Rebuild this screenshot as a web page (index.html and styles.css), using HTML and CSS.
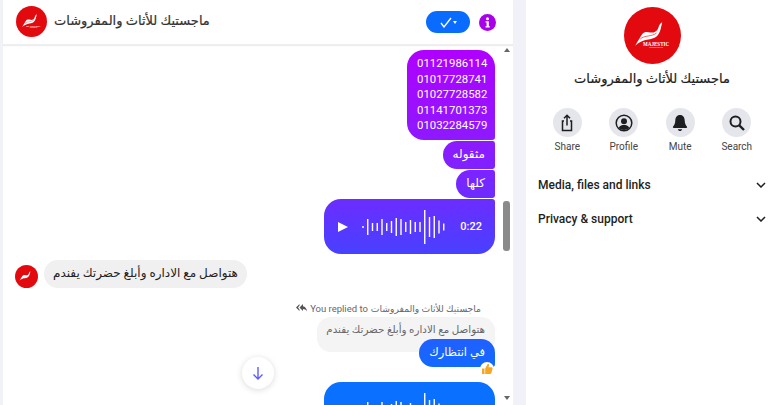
FILE: index.html
```html
<!DOCTYPE html>
<html lang="en">
<head>
    <meta charset="UTF-8">
    <meta name="viewport" content="width=device-width, initial-scale=1.0">
    <title>Messenger chat</title>
    <link rel="stylesheet" href="styles.css">
</head>
<body>
    <div class="layout">
        <section class="chat">
            <header class="chat-header">
                <svg class="avatar-md" viewBox="0 0 56 56">
                    <circle cx="28" cy="28" r="28" fill="#e30a0f"/>
                    <path fill="#fff" d="M37.500 15C35.500 16 34.500 18 33.500 21C32.500 24 29 25.500 26 25C23 24.500 20 24 18 26.500C16 29 14 33 11 38C14 35.500 17 33.500 21 32.500C25 31.500 29.500 31.500 32.500 28.500C35.500 25.500 36.500 20 37.500 15Z"/>
                    <path fill="none" stroke="#e30a0f" stroke-width=".6" d="M16 31.500C20 27.500 27 29.500 32 25.500"/>
                    <text x="31.500" y="38" text-anchor="middle" class="logo-name">MAJESTIC</text>
                    <text x="31.500" y="40.500" text-anchor="middle" class="logo-sub">FURNITURE CO</text>
                </svg>
                <span class="title" dir="rtl" lang="ar">ماجستيك للأثاث والمفروشات</span>
                <button class="status-btn">
                    <svg width="12" height="11" viewBox="0 0 12 11"><path d="M1 6l3 4L11 1" fill="none" stroke="#fff" stroke-width="1.300"/></svg>
                    <span class="caret"></span>
                </button>
                <svg class="info" width="17" height="17" viewBox="0 0 17 17">
                    <circle cx="8.500" cy="8.500" r="8.500" fill="#a800e8"/>
                    <circle cx="8.500" cy="4.700" r="1.500" fill="#fff"/>
                    <path d="M6.500 7.300h3.300v5h1v1.300H6.500v-1.300h1.100V8.600H6.500z" fill="#fff"/>
                </svg>
            </header>

            <div class="chat-body">
                <div class="messages">
                    <div class="bubble out numbers">
                        01121986114<br>01017728741<br>01027728582<br>01141701373<br>01032284579
                    </div>
                    <div class="bubble out short" dir="rtl" lang="ar">مثقوله</div>
                    <div class="bubble out short" dir="rtl" lang="ar">كلها</div>
                    <div class="bubble out audio">
                        <svg width="10" height="10" viewBox="0 0 10 10"><path d="M0 0l10 5-10 5z" fill="#fff"/></svg>
                        <svg class="wave" width="84" height="36" viewBox="0 0 84 36">
                            <path d="M1 17v2M5.750 10v16M10.500 14v8M15.250 14v8M20 10v16M24.750 14v8M29.500 12v12M34.250 9v18M39 10v16M43.750 13v10M48.500 11v14M53.250 13v10M58 13v10M62.750 1v34M67.500 8v20M72.250 7v22M77 11.500v13M81.750 14.500v7"/>
                        </svg>
                        <span class="time">0:22</span>
                    </div>

                    <div class="incoming">
                        <svg class="avatar-sm" viewBox="0 0 56 56">
                            <circle cx="28" cy="28" r="28" fill="#e30a0f"/>
                            <path fill="#fff" d="M37.500 15C35.500 16 34.500 18 33.500 21C32.500 24 29 25.500 26 25C23 24.500 20 24 18 26.500C16 29 14 33 11 38C14 35.500 17 33.500 21 32.500C25 31.500 29.500 31.500 32.500 28.500C35.500 25.500 36.500 20 37.500 15Z"/>
                        </svg>
                        <div class="bubble in" dir="rtl" lang="ar">هتواصل مع الاداره وأبلغ حضرتك يفندم</div>
                    </div>

                    <div class="reply-label">
                        <svg width="11" height="9" viewBox="0 0 11 9"><path d="M3.500 0L0 3.500 3.500 7V5.500L2 3.500l1.500-2zM7 0L3.500 3.500 7 7V5c1.700 0 3 .7 4 2.500C10.800 4.500 9.200 2.500 7 2.200z" fill="#555"/></svg>
                        <span>You replied to</span>
                        <span class="reply-name" dir="rtl" lang="ar">ماجستيك للأثاث والمفروشات</span>
                    </div>
                    <div class="quoted" dir="rtl" lang="ar">هتواصل مع الاداره وأبلغ حضرتك يفندم</div>
                    <div class="bubble out reply" dir="rtl" lang="ar">
                        في انتظارك
                        <span class="reaction">
                            <svg width="12" height="12" viewBox="0 0 12 12"><path d="M1 5.500h2.500V11H1zM4.200 5.500L6.800.8c1-.3 1.500.6 1.200 1.600L7.500 4.300h3c.9 0 1.300.8 1 1.500l-1.200 4.400c-.2.600-.6.800-1.200.8H4.200z" fill="#f5a623"/></svg>
                        </span>
                    </div>
                    <div class="bubble out audio last">
                        <svg width="10" height="10" viewBox="0 0 10 10"><path d="M0 0l10 5-10 5z" fill="#fff"/></svg>
                        <svg class="wave" width="84" height="36" viewBox="0 0 84 36">
                            <path d="M1 17v2M5.750 10v16M10.500 14v8M15.250 14v8M20 10v16M24.750 14v8M29.500 12v12M34.250 9v18M39 10v16M43.750 13v10M48.500 11v14M53.250 13v10M58 13v10M62.750 1v34M67.500 8v20M72.250 7v22M77 11.500v13M81.750 14.500v7"/>
                        </svg>
                    </div>
                </div>
                <div class="scrollbar">
                    <span class="arrow-up"></span>
                    <span class="thumb"></span>
                    <span class="arrow-down"></span>
                </div>
                <button class="to-bottom">
                    <svg width="14" height="14" viewBox="0 0 14 14"><path d="M7 1v12M2.500 8.500L7 13l4.500-4.500" fill="none" stroke="#5b5cff" stroke-width="1.400"/></svg>
                </button>
            </div>
        </section>

        <aside class="details">
            <svg class="avatar-lg" viewBox="0 0 56 56">
                <circle cx="28" cy="28" r="28" fill="#e30a0f"/>
                <path fill="#fff" d="M37.500 15C35.500 16 34.500 18 33.500 21C32.500 24 29 25.500 26 25C23 24.500 20 24 18 26.500C16 29 14 33 11 38C14 35.500 17 33.500 21 32.500C25 31.500 29.500 31.500 32.500 28.500C35.500 25.500 36.500 20 37.500 15Z"/>
                <path fill="none" stroke="#e30a0f" stroke-width=".6" d="M16 31.500C20 27.500 27 29.500 32 25.500"/>
                <text x="31.500" y="38" text-anchor="middle" class="logo-name">MAJESTIC</text>
                <text x="31.500" y="40.500" text-anchor="middle" class="logo-sub">FURNITURE CO</text>
            </svg>
            <div class="details-name" dir="rtl" lang="ar">ماجستيك للأثاث والمفروشات</div>
            <div class="actions">
                <div class="action">
                    <span class="action-icon">
                        <svg width="16" height="18" viewBox="0 0 16 18"><path d="M5 7H3.500v9.500h9V7H11M8 11.500V1.500M5 4.300L8 1.300l3 3" fill="none" stroke="#1c1e21" stroke-width="1.500"/></svg>
                    </span>
                    <span>Share</span>
                </div>
                <div class="action">
                    <span class="action-icon">
                        <svg width="18" height="18" viewBox="0 0 18 18"><circle cx="9" cy="9" r="7.800" fill="none" stroke="#1c1e21" stroke-width="1.500"/><circle cx="9" cy="7.200" r="3" fill="#1c1e21"/><path d="M3.800 13.500C5 11.500 7 11 9 11s4 .5 5.200 2.500C13 15.300 11 16 9 16s-4-.7-5.200-2.500z" fill="#1c1e21"/></svg>
                    </span>
                    <span>Profile</span>
                </div>
                <div class="action">
                    <span class="action-icon">
                        <svg width="16" height="18" viewBox="0 0 16 18"><path d="M8 1C4.800 1 3.300 3.500 3.300 6.500c0 3.500-1.500 5-2.300 6.300-.3.500 0 1.200.7 1.200h12.600c.7 0 1-.7.700-1.200-.8-1.300-2.300-2.800-2.300-6.300C12.700 3.500 11.200 1 8 1zM5.800 15.200c.3 1.100 1.200 1.800 2.200 1.800s1.900-.7 2.200-1.800z" fill="#1c1e21"/></svg>
                    </span>
                    <span>Mute</span>
                </div>
                <div class="action">
                    <span class="action-icon">
                        <svg width="16" height="16" viewBox="0 0 16 16"><circle cx="6.500" cy="6.500" r="5" fill="none" stroke="#1c1e21" stroke-width="2"/><path d="M10.300 10.300L15 15" stroke="#1c1e21" stroke-width="2.400"/></svg>
                    </span>
                    <span>Search</span>
                </div>
            </div>
            <div class="section-row">
                <span>Media, files and links</span>
                <svg width="10" height="6" viewBox="0 0 10 6"><path d="M1 1l4 4 4-4" fill="none" stroke="#1c1e21" stroke-width="1.500"/></svg>
            </div>
            <div class="section-row">
                <span>Privacy &amp; support</span>
                <svg width="10" height="6" viewBox="0 0 10 6"><path d="M1 1l4 4 4-4" fill="none" stroke="#1c1e21" stroke-width="1.500"/></svg>
            </div>
        </aside>
    </div>
</body>
</html>
```

FILE: styles.css
```css
html, body {
    height: 100%;
}

body {
    margin: 0;
    overflow: hidden;
    background-color: #f1f2f7;
    color: #1c1e21;
    font-family: Roboto, "DejaVu Sans", sans-serif;
}

.logo-name {
    font-family: "Liberation Serif", serif;
    font-size: 5px;
    font-weight: bold;
    fill: #fff;
}

.logo-sub {
    font-family: "Liberation Sans", sans-serif;
    font-size: 1.800px;
    fill: #fff;
}

.layout {
    display: flex;
    height: 405px;
}

/* chat column */
.chat {
    width: 510px;
    margin-left: 3px;
    background-color: #ffffff;
    display: flex;
    flex-direction: column;
}

.chat-header {
    height: 44px;
    flex: none;
    display: flex;
    align-items: center;
    padding: 0 17px 0 13px;
    box-shadow: 0 2px 1px #eeeeee;
    box-sizing: border-box;
}

.avatar-md {
    width: 31px;
    height: 31px;
    margin-top: -1px;
}

.title {
    margin: -3px auto 0 7px;
    font-size: 13px;
    color: #333;
    -webkit-text-stroke: 0.2px #333;
}

.status-btn {
    width: 44px;
    height: 22px;
    margin-right: 9px;
    padding: 0;
    border: none;
    border-radius: 11px;
    background-color: #0a6cff;
    display: flex;
    align-items: center;
    justify-content: center;
    gap: 1px;
}

.caret {
    border: 2.500px solid transparent;
    border-top: 3px solid #fff;
    border-bottom: none;
}

.chat-body {
    flex: 1;
    min-height: 0;
    display: flex;
    position: relative;
}

.messages {
    flex: 1;
    min-width: 0;
    overflow: hidden;
    display: flex;
    flex-direction: column;
    align-items: flex-end;
    padding: 6px 5px 0 0;
}

.messages > * {
    flex: none;
}

/* bubbles */
.bubble {
    box-sizing: border-box;
    font-size: 12px;
}

.bubble.out {
    color: #fff;
    background: linear-gradient(#b000ff 50px, #8a1cff 150px, #4b3fff 250px, #0a70ff 385px) fixed;
}

.numbers {
    width: 88px;
    height: 90px;
    padding: 6px 0 0 10px;
    border-radius: 17px 17px 3px 17px;
    font-size: 11.400px;
    line-height: 15.600px;
}

.short {
    height: 28px;
    margin-top: 1px;
    padding: 0 10px;
    border-radius: 17px 3px 3px 17px;
    line-height: 27px;
}

.audio {
    width: 171px;
    height: 55px;
    margin-top: 1px;
    padding: 0 13px 0 14px;
    border-radius: 17px 3px 17px 17px;
    display: flex;
    align-items: center;
}

.wave {
    margin-left: 14px;
}

.wave path {
    fill: none;
    stroke: #fff;
    stroke-width: 1.400;
}

.time {
    margin-left: auto;
    font-size: 11px;
    font-weight: 500;
}

.incoming {
    align-self: flex-start;
    margin-top: 6px;
    padding-left: 12px;
    display: flex;
    align-items: flex-end;
    gap: 6px;
}

.avatar-sm {
    width: 23px;
    height: 23px;
}

.bubble.in {
    height: 28px;
    padding: 0 9px;
    border-radius: 14px;
    background-color: #f0f0f0;
    line-height: 27px;
    color: #222;
}

.reply-label {
    margin: 12px 14px 0 0;
    display: flex;
    align-items: center;
    gap: 3px;
    height: 16px;
    font-size: 9.500px;
    color: #65676b;
}

.reply-name {
    font-size: 9.200px;
}

.quoted {
    width: 178px;
    height: 35px;
    box-sizing: border-box;
    margin-top: 1px;
    padding: 6px 10px 0 0;
    border-radius: 14px;
    background-color: #f4f4f4;
    font-size: 10.300px;
    color: #65676b;
    white-space: nowrap;
}

.reply {
    position: relative;
    height: 28px;
    margin-top: -13px;
    padding: 0 10px;
    border-radius: 14px 14px 3px 14px;
    font-size: 11.500px;
    line-height: 27px;
}

.reaction {
    position: absolute;
    right: 1px;
    bottom: -9px;
    width: 14px;
    height: 14px;
    border-radius: 50%;
    background-color: #fff;
    display: flex;
    align-items: center;
    justify-content: center;
}

.last {
    margin-top: 15px;
    border-radius: 17px 17px 3px 17px;
}

/* fake scrollbar */
.scrollbar {
    width: 13px;
    flex: none;
    position: relative;
    display: flex;
    flex-direction: column;
    align-items: center;
}

.arrow-up {
    margin-top: 4px;
    border: 3.500px solid transparent;
    border-bottom: 4px solid #666;
    border-top: none;
}

.thumb {
    width: 7px;
    height: 50px;
    margin-top: 149px;
    border-radius: 3px;
    background-color: #8a8a8a;
}

.arrow-down {
    margin-top: auto;
    margin-bottom: 5px;
    border: 3.500px solid transparent;
    border-top: 4px solid #666;
    border-bottom: none;
}

.to-bottom {
    position: absolute;
    left: 239px;
    top: 313px;
    width: 32px;
    height: 32px;
    padding: 0;
    border: none;
    border-radius: 50%;
    background-color: #fff;
    box-shadow: 0 1px 6px rgba(0, 0, 0, 0.15);
    display: flex;
    align-items: center;
    justify-content: center;
}

/* right panel */
.details {
    flex: 1;
    margin-left: 13px;
    background-color: #ffffff;
    padding-top: 7px;
    display: flex;
    flex-direction: column;
}

.avatar-lg {
    width: 57px;
    height: 57px;
    margin-left: 98px;
    display: block;
}

.details-name {
    width: 226px;
    margin: 7px 0 0 13px;
    text-align: center;
    font-size: 13px;
    -webkit-text-stroke: 0.2px #1c1e21;
}

.actions {
    width: 226px;
    margin: 22px 0 0 13px;
    display: flex;
}

.action {
    flex: 1;
    display: flex;
    flex-direction: column;
    align-items: center;
    gap: 2px;
    font-size: 10px;
    line-height: 16px;
    color: #444;
}

.action-icon {
    width: 29px;
    height: 29px;
    border-radius: 50%;
    background-color: #e4e6eb;
    display: flex;
    align-items: center;
    justify-content: center;
}

.section-row {
    height: 34px;
    padding: 0 2px 0 12px;
    display: flex;
    align-items: center;
    justify-content: space-between;
    font-size: 12px;
    font-weight: 500;
}

.actions + .section-row {
    margin-top: 13px;
}
```
